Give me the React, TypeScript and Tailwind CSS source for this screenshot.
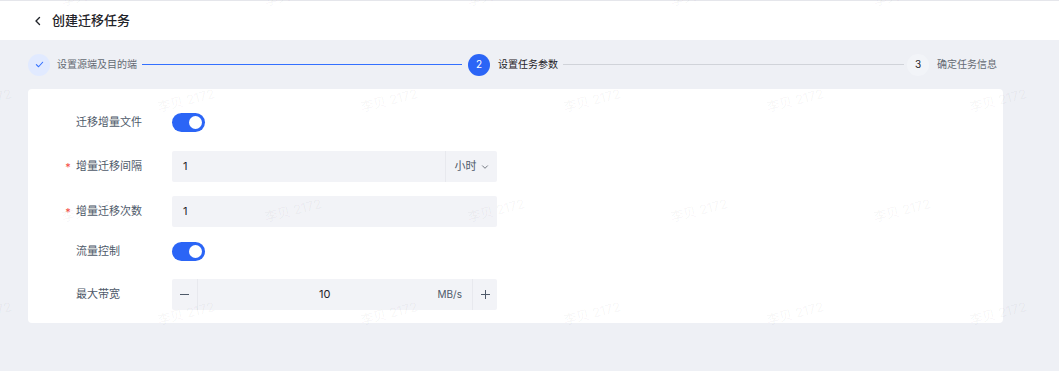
import React from 'react';

const marks: { x: number; y: number }[] = [];
[-6, 100, 210, 313].forEach((y, r) => {
  const start = r % 2 === 0 ? 61 : -46;
  for (let i = 0; i < 6; i++) marks.push({ x: start + i * 203, y });
});

const Toggle: React.FC = () => (
  <div className="w-[33px] h-[19px] rounded-full bg-[#2b65f6] flex items-center justify-end pr-[3px]">
    <div className="w-[13px] h-[13px] rounded-full bg-white" />
  </div>
);

const Label: React.FC<{ text: string; required?: boolean }> = ({ text, required }) => (
  <div className="w-[112px] flex items-center shrink-0">
    <span className="w-[16px] text-center text-[#f54a45] text-[11px] leading-none pt-[2px]">{required ? '*' : ''}</span>
    <span className="text-[11px] text-[#4e5969]">{text}</span>
  </div>
);

const App: React.FC = () => {
  return (
    <div className="relative w-[1059px] h-[371px] overflow-hidden bg-[#eef0f5] font-['Inter','Noto_Sans_CJK_SC',sans-serif]">
      {/* 顶部标题栏 */}
      <div className="h-10 bg-white border-t border-[#e5e6eb] flex items-center pl-[33px]">
        <svg width="10" height="10" viewBox="0 0 10 10" fill="none">
          <path d="M6.5 1.5 3 5l3.5 3.5" stroke="#1f2329" strokeWidth="1.4" strokeLinecap="round" strokeLinejoin="round" />
        </svg>
        <span className="ml-[9px] text-[13px] font-medium text-[#1f2329]">创建迁移任务</span>
      </div>

      {/* 步骤条 */}
      <div className="h-[49px] flex items-center px-[28px]">
        <div className="w-[22px] h-[22px] rounded-full bg-[#e1eaff] flex items-center justify-center">
          <svg width="9" height="9" viewBox="0 0 10 10" fill="none">
            <path d="M1.5 5.2 4 7.5l4.5-5" stroke="#3370ff" strokeWidth="1.2" strokeLinecap="round" strokeLinejoin="round" />
          </svg>
        </div>
        <span className="ml-[7px] text-[10px] text-[#646a73] w-[78px] whitespace-nowrap">设置源端及目的端</span>
        <div className="w-[320px] h-px bg-[#3370ff] ml-[7px] mr-[6px]" />
        <div className="w-[22px] h-[22px] rounded-full bg-[#2b65f6] flex items-center justify-center text-white text-[10px]">2</div>
        <span className="ml-[8px] text-[10px] text-[#1f2329] w-[58px] whitespace-nowrap">设置任务参数</span>
        <div className="flex-1 h-px bg-[#d0d3d9] ml-[7px] mr-[3px]" />
        <div className="w-[22px] h-[22px] rounded-full bg-[#f2f4f8] flex items-center justify-center text-[#1f2329] text-[10px]">3</div>
        <span className="ml-[8px] mr-[34px] text-[10px] text-[#646a73] w-[60px] whitespace-nowrap">确定任务信息</span>
      </div>

      {/* 表单卡片 */}
      <div className="ml-[28px] w-[975px] bg-white rounded-[4px] pt-[23px] pb-[13px] pl-[32px]">
        <div className="flex items-center h-[20px]">
          <Label text="迁移增量文件" />
          <Toggle />
        </div>

        <div className="flex items-center h-[31px] mt-[19px]">
          <Label text="增量迁移间隔" required />
          <div className="w-[325px] h-full bg-[#f2f3f7] rounded-[2px] flex items-center text-[11px] text-[#1f2329]">
            <span className="flex-1 pl-[11px]">1</span>
            <div className="w-px h-full bg-[#e8e9ee]" />
            <div className="w-[51px] flex items-center justify-center gap-[4px] text-[#4e5969]">
              小时
              <svg width="8" height="8" viewBox="0 0 8 8" fill="none">
                <path d="M1.5 2.8 4 5.3l2.5-2.5" stroke="#646a73" strokeWidth="0.9" strokeLinecap="round" strokeLinejoin="round" />
              </svg>
            </div>
          </div>
        </div>

        <div className="flex items-center h-[31px] mt-[14px]">
          <Label text="增量迁移次数" required />
          <div className="w-[325px] h-full bg-[#f2f3f7] rounded-[2px] flex items-center text-[11px] text-[#1f2329] pl-[11px]">1</div>
        </div>

        <div className="flex items-center h-[20px] mt-[14px]">
          <Label text="流量控制" />
          <Toggle />
        </div>

        <div className="flex items-center h-[31px] mt-[18px]">
          <Label text="最大带宽" />
          <div className="w-[325px] h-full bg-[#f2f3f7] rounded-[2px] flex items-center text-[11px] text-[#1f2329]">
            <div className="w-[25px] h-full flex items-center justify-center">
              <div className="w-[9px] h-px bg-[#4e5969]" />
            </div>
            <div className="w-px h-full bg-[#e8e9ee]" />
            <span className="flex-1 text-center pl-[14px]">10</span>
            <span className="text-[10px] text-[#4e5969] mr-[10px]">MB/s</span>
            <div className="w-px h-full bg-[#e8e9ee]" />
            <div className="w-[24px] h-full flex items-center justify-center">
              <svg width="11" height="11" viewBox="0 0 11 11" fill="none">
                <path d="M5.5 1v9M1 5.5h9" stroke="#4e5969" strokeWidth="1" />
              </svg>
            </div>
          </div>
        </div>
      </div>

      {/* 水印 */}
      <div className="absolute inset-0 pointer-events-none">
        {marks.map((m, i) => (
          <span
            key={i}
            className="absolute text-[13px] text-[rgba(31,35,41,0.05)] whitespace-nowrap -rotate-[14deg]"
            style={{ left: m.x, top: m.y - 9 }}
          >
            李贝 2172
          </span>
        ))}
      </div>
    </div>
  );
};

export default App;
